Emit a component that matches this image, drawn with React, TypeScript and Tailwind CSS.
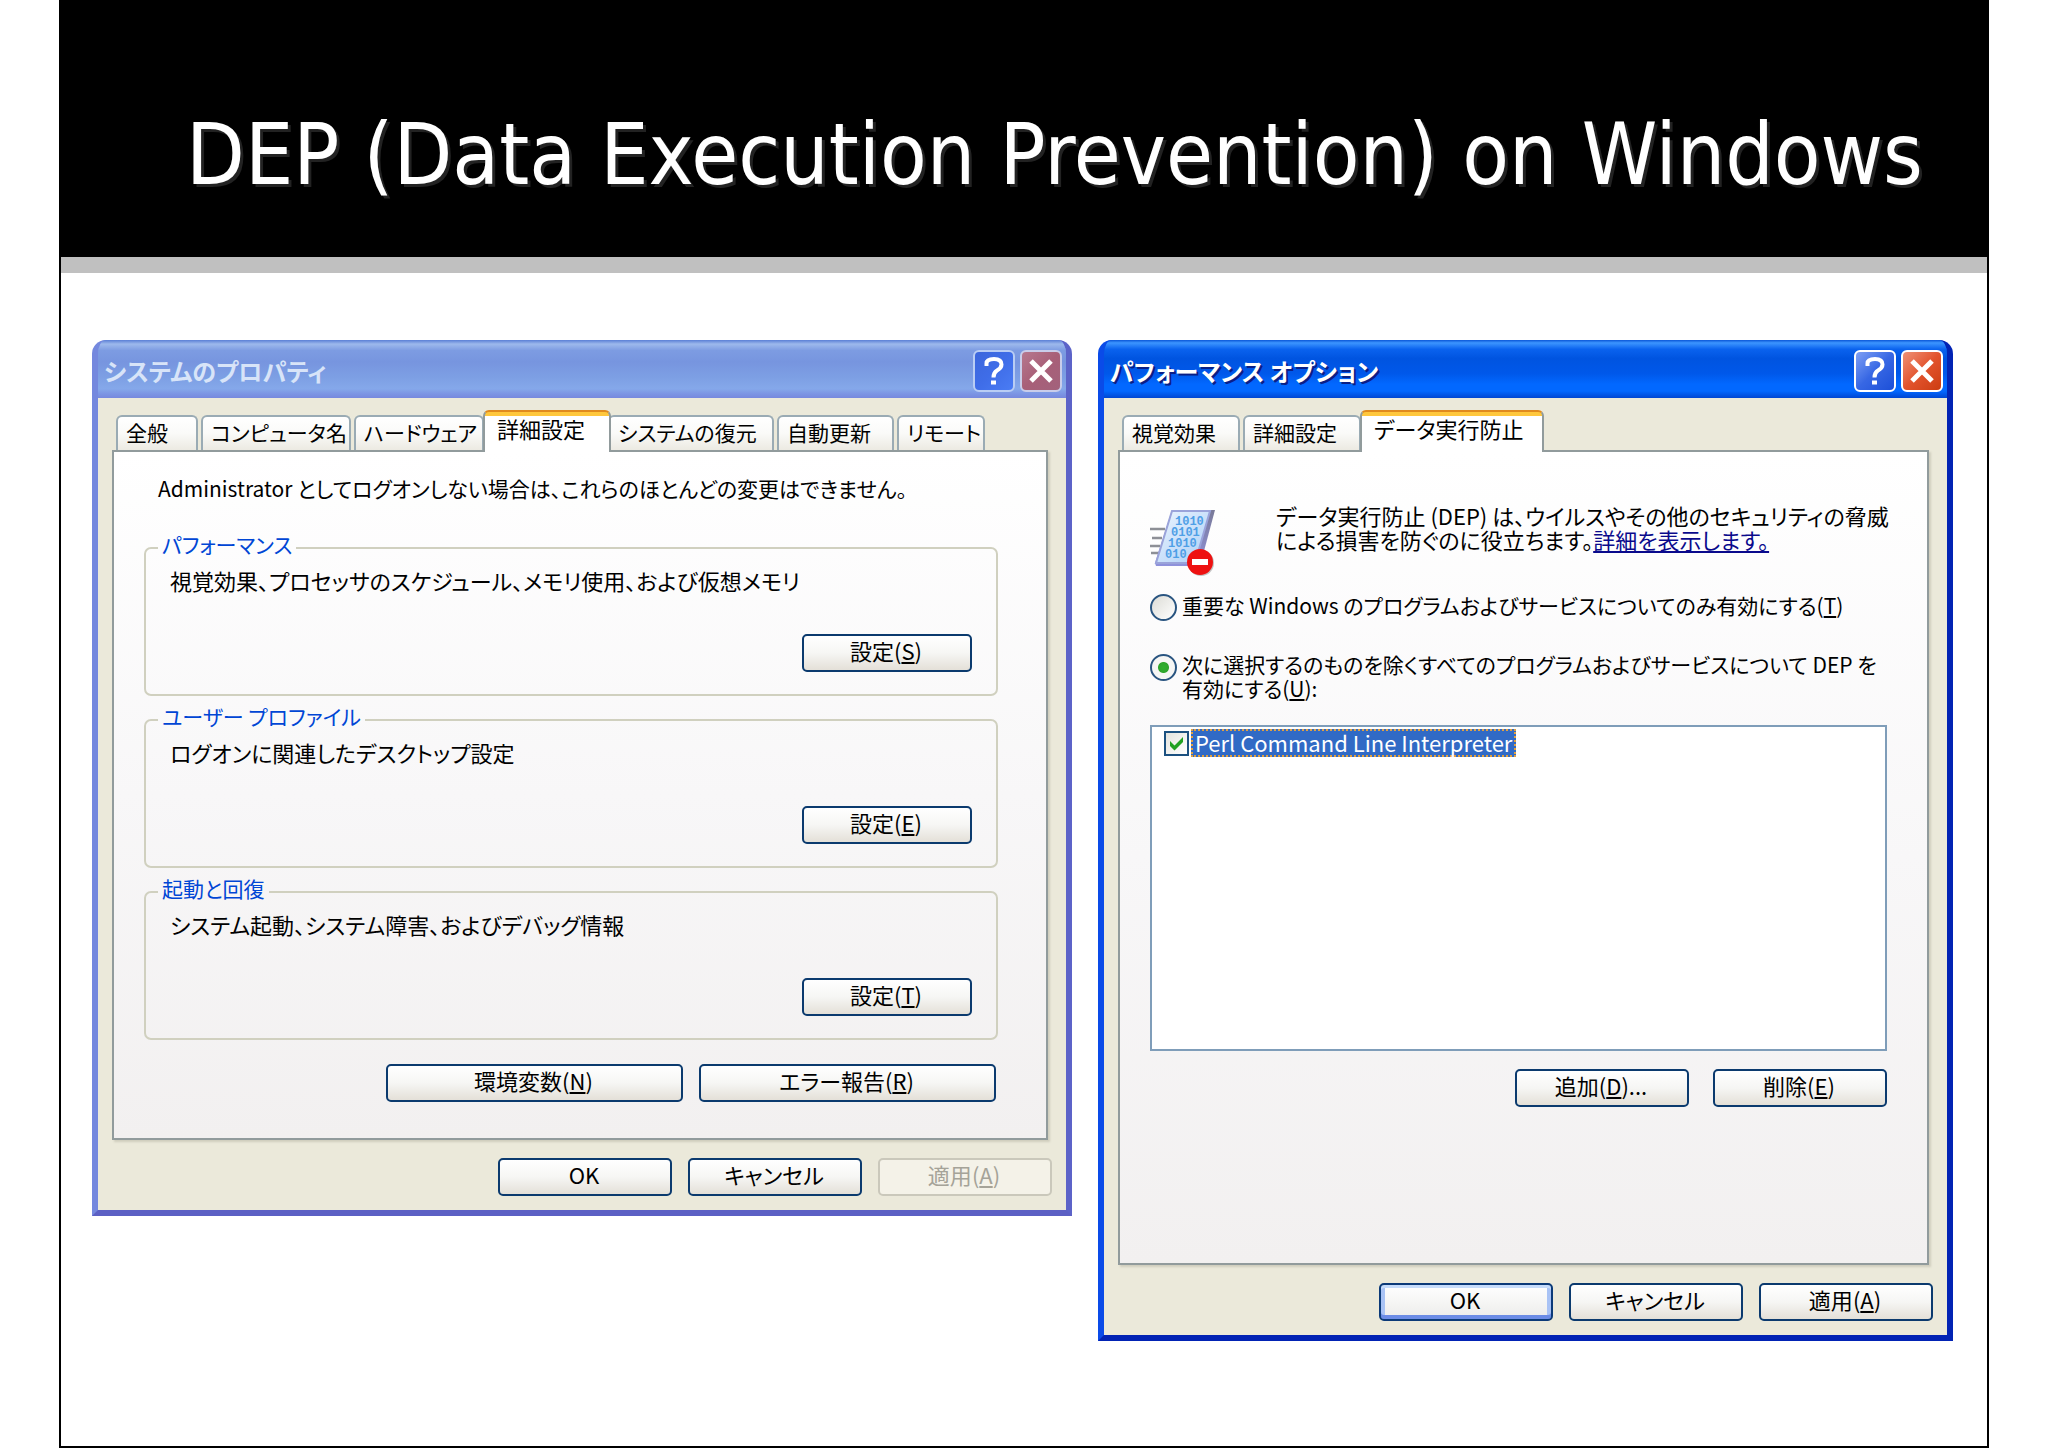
import React, { useState } from 'react';

type Tone = 'active' | 'inactive';

interface Tab {
  name: string;
  width: string;
}

interface DialogWindowProps {
  title: string;
  tone: Tone;
  tabs: Tab[];
  activeTab: string;
  footer: React.ReactNode;
  children: React.ReactNode;
}

interface XpButtonProps {
  label: string;
  accessKey?: string;
  suffix?: string;
  className: string;
  isDefault?: boolean;
  disabled?: boolean;
}

const frameStyles: Record<Tone, string> = {
  active: 'bg-[#0540d8] border-l-[#0a4be8] border-r-[#0223b4] border-b-[#0223b4]',
  inactive: 'bg-[#7b8fe0] border-l-[#7488de] border-r-[#5c63c8] border-b-[#5c60c4]',
};

const titleBarStyles: Record<Tone, string> = {
  active:
    'bg-[linear-gradient(180deg,#0a56d8_0%,#3c95ff_5%,#0a62ee_16%,#0054e0_32%,#0058ea_58%,#0268ff_76%,#0268ff_88%,#0046d2_100%)]',
  inactive:
    'bg-[linear-gradient(180deg,#5a7fd6_0%,#9db9ec_7%,#7d9ce2_18%,#7795df_38%,#7d9fe4_64%,#85a8ea_84%,#7c96e4_92%,#7688de_100%)]',
};

const titleTextStyles: Record<Tone, string> = {
  active: 'text-white [text-shadow:2px_2px_0_#0a1f86]',
  inactive: 'text-[#d8e4f8]',
};

const helpStyles: Record<Tone, string> = {
  active: 'border-white bg-linear-to-br from-[#7f9ff4] via-[#3767e4] to-[#1c4fd8]',
  inactive: 'border-[#b9cdf4] bg-linear-to-br from-[#3c66dc] via-[#3f6de8] to-[#4a7cf4]',
};

const closeStyles: Record<Tone, string> = {
  active: 'border-white bg-linear-to-br from-[#ee9074] via-[#e2532c] to-[#cc3c10]',
  inactive: 'border-[#c9cdea] bg-linear-to-br from-[#b6788e] via-[#a85f78] to-[#a2627c]',
};

const XpButton: React.FC<XpButtonProps> = ({ label, accessKey, suffix, className, isDefault, disabled }) => {
  const look = disabled
    ? 'border-[#cac8bb] bg-[#f4f2e8] text-[#a5a398]'
    : isDefault
      ? 'border-[#0b3a78] bg-linear-to-b from-white to-[#ececea] shadow-[inset_0_3px_0_#c6dcfb,inset_0_-4px_0_#6c8ce6,inset_4px_0_0_#a9c3f5,inset_-4px_0_0_#a9c3f5]'
      : 'border-[#0b3a6e] bg-linear-to-b from-white via-[#f6f6f4] to-[#e4e0d8]';

  return (
    <button
      type="button"
      disabled={disabled}
      className={`flex h-[38px] items-center justify-center rounded-[5px] border-2 pr-0.5 pb-1.5 whitespace-nowrap ${look} ${className}`}
    >
      <span>
        {label}
        {accessKey && (
          <>
            (<u className="underline-offset-2">{accessKey}</u>)
          </>
        )}
        {suffix}
      </span>
    </button>
  );
};

const TabStrip: React.FC<{ tabs: Tab[]; activeTab: string }> = ({ tabs, activeTab }) => (
  <div role="tablist" className="flex h-10 items-end gap-[3px] pl-1 text-[21px]">
    {tabs.map((tab) =>
      tab.name === activeTab ? (
        <button
          key={tab.name}
          type="button"
          role="tab"
          aria-selected="true"
          className={`z-10 -mr-1.5 -mb-0.5 -ml-1 h-[42px] shrink-0 rounded-t-[6px] border-x-2 border-t-2 border-x-[#919b9c] border-t-[#e08a1e] bg-[linear-gradient(180deg,#ffc73c_0,#ffc73c_4px,#fff_4px)] px-3 pb-2 text-left text-[22px] whitespace-nowrap ${tab.width}`}
        >
          {tab.name}
        </button>
      ) : (
        <button
          key={tab.name}
          type="button"
          role="tab"
          aria-selected="false"
          className={`h-[35px] shrink-0 rounded-t-[6px] border-x-2 border-t-2 border-[#9aabb4] bg-linear-to-b from-white via-[#fafaf8] to-[#eceae2] pb-1 pl-2 text-left whitespace-nowrap ${tab.width}`}
        >
          {tab.name}
        </button>
      ),
    )}
  </div>
);

const DialogWindow: React.FC<DialogWindowProps> = ({ title, tone, tabs, activeTab, footer, children }) => (
  <section
    aria-label={title}
    className={`flex flex-col overflow-hidden rounded-t-[14px] border-x-[6px] border-b-[6px] ${frameStyles[tone]}`}
  >
    <header className={`-mx-1.5 flex h-[58px] items-center gap-[5px] pt-1 pr-2.5 pl-3 ${titleBarStyles[tone]}`}>
      <h2 className={`flex-1 text-[24px] leading-10 font-bold ${titleTextStyles[tone]}`}>{title}</h2>
      <button
        type="button"
        aria-label="ヘルプ"
        className={`flex size-[42px] items-center justify-center rounded-[6px] border-2 ${helpStyles[tone]}`}
      >
        <svg viewBox="0 0 38 38" className="size-[38px]" fill="none" stroke="#fff" strokeWidth="4">
          <path d="M11.500 14V11.500Q11.500 7 19 7T26.500 12.500Q26.500 16 22 18.500Q18.500 20.500 18.500 25.500" />
          <path d="M18.500 28.500V32.500" strokeWidth="5" />
        </svg>
      </button>
      <button
        type="button"
        aria-label="閉じる"
        className={`flex size-[42px] items-center justify-center rounded-[6px] border-2 ${closeStyles[tone]}`}
      >
        <svg viewBox="0 0 38 38" className="size-[38px]" fill="none" stroke="#fff" strokeWidth="5">
          <path d="M9 9L29 29M29 9L9 29" />
        </svg>
      </button>
    </header>

    <div className="bg-[#ebe9da] pt-3 pr-3.5 pb-3.5 pl-3.5">
      <TabStrip tabs={tabs} activeTab={activeTab} />
      <div
        role="tabpanel"
        className="mr-1 border-2 border-[#919b9c] bg-linear-to-b from-white via-[#f8f7f8] to-[#f2f0f0] shadow-[2px_2px_2px_#cfcdbd]"
      >
        {children}
      </div>
      <footer className="mt-[18px] flex justify-end gap-4">{footer}</footer>
    </div>
  </section>
);

const systemTabs: Tab[] = [
  { name: '全般', width: 'w-[82px]' },
  { name: 'コンピュータ名', width: 'w-[150px]' },
  { name: 'ハードウェア', width: 'w-[130px]' },
  { name: '詳細設定', width: 'w-[128px]' },
  { name: 'システムの復元', width: 'w-[166px]' },
  { name: '自動更新', width: 'w-[117px]' },
  { name: 'リモート', width: 'w-[88px]' },
];

const performanceTabs: Tab[] = [
  { name: '視覚効果', width: 'w-[118px]' },
  { name: '詳細設定', width: 'w-[118px]' },
  { name: 'データ実行防止', width: 'w-[184px]' },
];

const groups = [
  { title: 'パフォーマンス', text: '視覚効果、プロセッサのスケジュール、メモリ使用、および仮想メモリ', key: 'S' },
  { title: 'ユーザー プロファイル', text: 'ログオンに関連したデスクトップ設定', key: 'E' },
  { title: '起動と回復', text: 'システム起動、システム障害、およびデバッグ情報', key: 'T' },
];

const SystemProperties: React.FC = () => (
  <DialogWindow
    title="システムのプロパティ"
    tone="inactive"
    tabs={systemTabs}
    activeTab="詳細設定"
    footer={
      <>
        <XpButton label="OK" className="w-[174px]" />
        <XpButton label="キャンセル" className="w-[174px]" />
        <XpButton label="適用" accessKey="A" className="w-[174px]" disabled />
      </>
    }
  >
    <div className="pt-5 pr-12 pb-9 pl-[30px]">
      <p className="pl-3.5 text-[21px] leading-8 whitespace-nowrap">
        Administrator としてログオンしない場合は、これらのほとんどの変更はできません。
      </p>
      <div className="mt-[30px] flex flex-col gap-2.5">
        {groups.map((group) => (
          <fieldset key={group.title} className="h-[162px] rounded-[7px] border-2 border-[#d0d0bf] px-6">
            <legend className="-ml-3 px-1 pb-2 text-[21px] leading-5 text-[#0046d5]">{group.title}</legend>
            <p className="pt-1 leading-7 whitespace-nowrap">{group.text}</p>
            <div className="mt-10 flex justify-end">
              <XpButton label="設定" accessKey={group.key} className="w-[170px]" />
            </div>
          </fieldset>
        ))}
      </div>
      <div className="mt-6 flex justify-end gap-4 pr-0.5">
        <XpButton label="環境変数" accessKey="N" className="w-[297px]" />
        <XpButton label="エラー報告" accessKey="R" className="w-[297px]" />
      </div>
    </div>
  </DialogWindow>
);

const DepIcon: React.FC = () => (
  <svg viewBox="0 0 66 68" className="h-[68px] w-[66px] shrink-0" aria-hidden="true">
    <defs>
      <linearGradient id="dep-page" x1="0" y1="0" x2="1" y2="1">
        <stop offset="0" stopColor="#eef6ff" />
        <stop offset="1" stopColor="#a9cdf6" />
      </linearGradient>
      <linearGradient id="dep-edge" x1="0" y1="0" x2="0" y2="1">
        <stop offset="0" stopColor="#7a7a98" />
        <stop offset="1" stopColor="#8f92dc" />
      </linearGradient>
    </defs>
    <g stroke="#8d8f96" strokeWidth="2.500">
      <path d="M0 20H15M2 29H12M0 37H10M1 44H9" />
    </g>
    <path d="M22 1H65L50 57H6L5 54Z" fill="url(#dep-edge)" />
    <path d="M22 2H60L45 54H6Z" fill="url(#dep-page)" stroke="#9aa3da" strokeWidth="2" />
    <g
      fill="#4f9fe6"
      fontFamily="Liberation Mono, monospace"
      fontSize="12"
      fontWeight="700"
    >
      <text x="25" y="16">1010</text>
      <text x="21" y="27">0101</text>
      <text x="18" y="38">1010</text>
      <text x="15" y="49">010</text>
    </g>
    <circle cx="51" cy="54" r="13" fill="#8a8a8a" opacity="0.500" />
    <circle cx="50" cy="53" r="13" fill="#ee1111" />
    <rect x="42" y="50" width="16" height="6" fill="#fff" />
  </svg>
);

const radioClass =
  'size-[27px] shrink-0 appearance-none rounded-full border-2 border-[#2a5580] bg-linear-to-br from-[#dcdcd6] to-white checked:bg-[radial-gradient(circle,#2fb02c_0,#2fa52c_5px,#f6f6f4_6px)]';

const PerformanceOptions: React.FC = () => {
  const [mode, setMode] = useState<'essential' | 'all'>('all');
  const [perlChecked, setPerlChecked] = useState(true);

  return (
    <DialogWindow
      title="パフォーマンス オプション"
      tone="active"
      tabs={performanceTabs}
      activeTab="データ実行防止"
      footer={
        <>
          <XpButton label="OK" className="w-[174px]" isDefault />
          <XpButton label="キャンセル" className="w-[174px]" />
          <XpButton label="適用" accessKey="A" className="w-[174px]" />
        </>
      }
    >
      <div className="pt-[51px] pr-10 pb-[156px] pl-[30px]">
        <div className="flex gap-[60px]">
          <div className="pt-1.5">
            <DepIcon />
          </div>
          <p className="leading-6 whitespace-nowrap">
            データ実行防止 (DEP) は、ウイルスやその他のセキュリティの脅威
            <br />
            による損害を防ぐのに役立ちます。
            <a href="#details" className="text-[#0a0a8c] underline">
              詳細を表示します。
            </a>
          </p>
        </div>

        <label className="mt-3.5 flex items-center gap-[5px] text-[21px] whitespace-nowrap">
          <input
            type="radio"
            name="dep"
            className={radioClass}
            checked={mode === 'essential'}
            onChange={() => setMode('essential')}
          />
          <span className="pb-1 leading-7">
            重要な Windows のプログラムおよびサービスについてのみ有効にする(<u>T</u>)
          </span>
        </label>
        <label className="mt-[29px] flex items-start gap-[5px] text-[21px] leading-6 whitespace-nowrap">
          <input
            type="radio"
            name="dep"
            className={`mt-0.5 ${radioClass}`}
            checked={mode === 'all'}
            onChange={() => setMode('all')}
          />
          <span>
            次に選択するのものを除くすべてのプログラムおよびサービスについて DEP を
            <br />
            有効にする(<u>U</u>):
          </span>
        </label>

        <div className="mt-[25px] h-[326px] border-2 border-[#7f9db9] bg-white px-3">
          <label className="flex w-fit items-center gap-0.5 pt-0.5">
            <span className="grid size-[25px]">
              <input
                type="checkbox"
                className="peer col-start-1 row-start-1 appearance-none border-2 border-[#1c5180] bg-linear-to-br from-[#e4e4de] to-white"
                checked={perlChecked}
                onChange={(e) => setPerlChecked(e.target.checked)}
              />
              <svg
                viewBox="0 0 25 25"
                className="pointer-events-none invisible col-start-1 row-start-1 peer-checked:visible"
              >
                <path d="M6 10L10.500 14.500L19 6V11L10.500 19.500L6 15Z" fill="#21a121" />
              </svg>
            </span>
            <span className="border-2 border-dotted border-[#e0a040] bg-[#316ac5] px-0.5 pb-0.5 leading-[22px] whitespace-nowrap text-white">
              Perl Command Line Interpreter
            </span>
          </label>
        </div>

        <div className="mt-[18px] flex justify-end gap-6">
          <XpButton label="追加" accessKey="D" suffix="..." className="w-[174px]" />
          <XpButton label="削除" accessKey="E" className="w-[174px]" />
        </div>
      </div>
    </DialogWindow>
  );
};

export default function App() {
  return (
    <div className="min-h-screen bg-white px-[59px] font-['Noto_Sans_CJK_JP',sans-serif] text-[22px] text-black [font-feature-settings:'palt']">
      <main className="min-h-[1448px] border-x-2 border-b-2 border-black">
        <header className="border-b-[16px] border-[#c0c0c0] bg-black pt-[105px] pr-[50px] pb-[52px] pl-[125px]">
          <h1 className="font-['DejaVu_Sans_Condensed','DejaVu_Sans',sans-serif] text-[85px] leading-[100px] whitespace-nowrap text-white [text-shadow:3px_3px_0_#222]">
            DEP (Data Execution Prevention) on Windows
          </h1>
        </header>
        <div className="grid grid-cols-[980fr_855fr] items-start gap-[26px] pt-[67px] pr-[34px] pl-[31px]">
          <SystemProperties />
          <PerformanceOptions />
        </div>
      </main>
    </div>
  );
}
